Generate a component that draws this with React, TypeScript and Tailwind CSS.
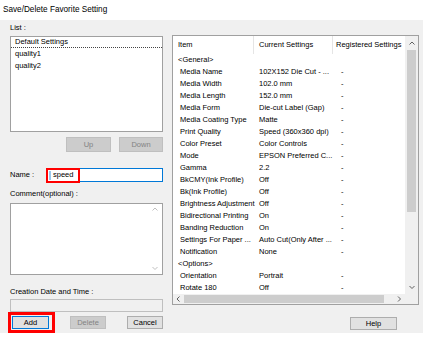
import React from 'react'

type Row = { item: string; value?: string; group?: boolean }

const ROWS: Row[] = [
  { item: '<General>', group: true },
  { item: 'Media Name', value: '102X152 Die Cut - ...' },
  { item: 'Media Width', value: '102.0 mm' },
  { item: 'Media Length', value: '152.0 mm' },
  { item: 'Media Form', value: 'Die-cut Label (Gap)' },
  { item: 'Media Coating Type', value: 'Matte' },
  { item: 'Print Quality', value: 'Speed (360x360 dpi)' },
  { item: 'Color Preset', value: 'Color Controls' },
  { item: 'Mode', value: 'EPSON Preferred C...' },
  { item: 'Gamma', value: '2.2' },
  { item: 'BkCMY(Ink Profile)', value: 'Off' },
  { item: 'Bk(Ink Profile)', value: 'Off' },
  { item: 'Brightness Adjustment', value: 'Off' },
  { item: 'Bidirectional Printing', value: 'On' },
  { item: 'Banding Reduction', value: 'On' },
  { item: 'Settings For Paper ...', value: 'Auto Cut(Only After ...' },
  { item: 'Notification', value: 'None' },
  { item: '<Options>', group: true },
  { item: 'Orientation', value: 'Portrait' },
  { item: 'Rotate 180', value: 'Off' },
]

// small scrollbar arrow
function Arrow({ dir, color = '#606060' }: { dir: 'up' | 'down' | 'left' | 'right'; color?: string }) {
  const d = {
    up: 'M0.5 3.5 L3 1 L5.5 3.5',
    down: 'M0.5 1 L3 3.5 L5.5 1',
    left: 'M3.5 0.5 L1 3 L3.5 5.5',
    right: 'M1 0.5 L3.5 3 L1 5.5',
  }[dir]
  const horiz = dir === 'up' || dir === 'down'
  return (
    <svg width={horiz ? 6 : 5} height={horiz ? 5 : 6} viewBox={horiz ? '0 0 6 5' : '0 0 5 6'}>
      <path d={d} fill="none" stroke={color} strokeWidth="1" />
    </svg>
  )
}

function Btn({ label, disabled, focused, className }: { label: string; disabled?: boolean; focused?: boolean; className?: string }) {
  return (
    <div
      className={`h-full flex items-center justify-center border ${
        disabled
          ? 'bg-[#cccccc] border-[#bfbfbf] text-[#838383]'
          : focused
          ? 'bg-[#e1e1e1] border-[#0078d7] text-black'
          : 'bg-[#e1e1e1] border-[#adadad] text-black'
      } ${className ?? ''}`}
    >
      {label}
    </div>
  )
}

export default function App() {
  return (
    <div className="w-[427px] h-[339px] bg-white font-['Liberation_Sans',Arial,sans-serif] text-[7.5px] leading-none text-black overflow-hidden">
      {/* Title */}
      <div className="h-[20px] pl-[3px] flex items-center text-[8.2px]">Save/Delete Favorite Setting</div>

      <div className="w-[423px] h-[313px] bg-[#f0f0f0] flex">
        {/* Left column */}
        <div className="w-[153px] ml-[10px] flex flex-col">
          <div className="mt-[2px] h-[12px] flex items-center">List :</div>
          <div className="mt-[2px] h-[96px] border border-[#a0a0a0] bg-white">
            <div className="h-[11px] pl-[4px] flex items-center border-b border-dotted border-[#444]">Default Settings</div>
            <div className="h-[12px] pl-[4px] flex items-center">quality1</div>
            <div className="h-[11px] pl-[4px] flex items-center">quality2</div>
          </div>

          <div className="mt-[5px] h-[15px] flex justify-end gap-[8px]">
            <Btn label="Up" disabled className="w-[45px]" />
            <Btn label="Down" disabled className="w-[44px]" />
          </div>

          {/* Name */}
          <div className="mt-[16px] h-[14px] flex items-center">
            <div className="w-[37px]">Name :</div>
            <div className="relative flex-1 h-full border border-[#0078d7] bg-white flex items-center">
              <span className="ml-[1px] w-[2px] h-[9px] bg-[#99c9ef]" />
              <span className="ml-[2px]">speed</span>
              <div className="absolute left-[-2px] top-[-1px] w-[34px] h-[15px] border-2 border-[#ff0000]" />
            </div>
          </div>

          <div className="mt-[6px] h-[12px] flex items-center">Comment(optional) :</div>
          <div className="mt-[3px] h-[72px] border border-[#a0a0a0] bg-white flex justify-end">
            <div className="w-[14px] flex flex-col justify-between items-center py-[3px]">
              <Arrow dir="up" color="#bfbfbf" />
              <Arrow dir="down" color="#bfbfbf" />
            </div>
          </div>

          <div className="mt-[11px] h-[12px] flex items-center">Creation Date and Time :</div>
          <div className="mt-[1px] h-[13px] border border-[#bfbfbf] bg-[#f0f0f0]" />

          {/* Bottom buttons */}
          <div className="mt-[4px] h-[13px] flex">
            <div className="relative ml-[2px] w-[37px] h-full">
              <Btn label="Add" focused className="w-full" />
              <div className="absolute left-[-4px] top-[-4px] right-[-6px] bottom-[-4px] border-[3px] border-[#ff0000]" />
            </div>
            <Btn label="Delete" disabled className="ml-[21px] w-[36px]" />
            <Btn label="Cancel" className="ml-auto w-[36px]" />
          </div>
        </div>

        {/* Right column */}
        <div className="ml-[9px] w-[247px] flex flex-col">
          <div className="mt-[15px] h-[270px] border border-[#a0a0a0] bg-white flex flex-col">
            <div className="flex h-[258px]">
              <div className="w-[232px] overflow-hidden whitespace-nowrap">
                {/* header */}
                <div className="h-[18px] flex items-center">
                  <div className="w-[81px] h-full pl-[5px] flex items-center border-r border-[#e5e5e5]">Item</div>
                  <div className="w-[79px] h-full pl-[5px] flex items-center border-r border-[#e5e5e5]">Current Settings</div>
                  <div className="flex-1 pl-[3px]">Registered Settings</div>
                </div>
                {ROWS.map((r, i) => (
                  <div key={i} className="h-[12px] flex items-center">
                    <div className={`w-[81px] ${r.group ? 'pl-[5px]' : 'pl-[7px]'}`}>{r.item}</div>
                    <div className="w-[79px] pl-[5px]">{r.value ?? ''}</div>
                    <div className="pl-[8px]">{r.group ? '' : '-'}</div>
                  </div>
                ))}
              </div>
              {/* vertical scrollbar */}
              <div className="w-[13px] bg-[#f0f0f0] flex flex-col">
                <div className="h-[14px] flex items-center justify-center"><Arrow dir="up" /></div>
                <div className="h-[162px] mx-[2px] bg-[#cdcdcd]" />
                <div className="flex-1" />
                <div className="h-[14px] flex items-center justify-center"><Arrow dir="down" /></div>
              </div>
            </div>
            {/* horizontal scrollbar */}
            <div className="flex h-[10px]">
              <div className="w-[232px] bg-[#f0f0f0] flex">
                <div className="w-[11px] flex items-center justify-center"><Arrow dir="left" /></div>
                <div className="w-[200px] my-[1px] bg-[#cdcdcd]" />
                <div className="flex-1" />
                <div className="w-[12px] flex items-center justify-center"><Arrow dir="right" /></div>
              </div>
              <div className="w-[13px] bg-[#f0f0f0]" />
            </div>
          </div>

          <div className="mt-[12px] h-[13px] flex justify-end mr-[22px]">
            <Btn label="Help" className="w-[47px]" />
          </div>
        </div>
      </div>
    </div>
  )
}
